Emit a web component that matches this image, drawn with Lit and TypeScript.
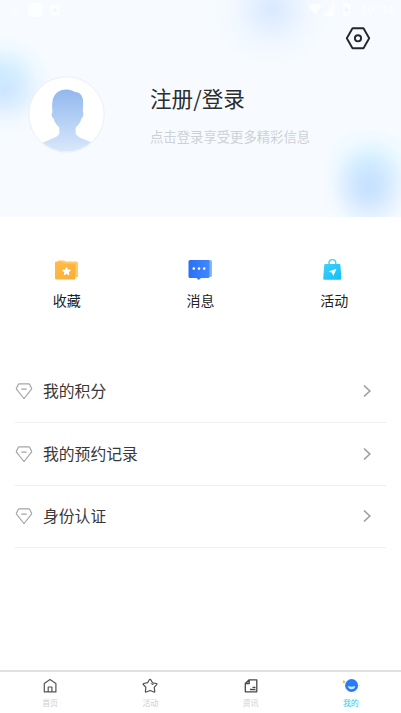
import { LitElement, html, css, svg } from "lit";
import { customElement } from "lit/decorators.js";
import { classMap } from "lit/directives/class-map.js";

const statusLeft = svg`
  <path d="M12 9h6M15 5v6M11 14h9" stroke="#fff" stroke-width="2" opacity=".7"/>
  <rect x="28" y="3" width="14" height="14" rx="2" fill="#fff"/>
  <path d="M50 6l3-2 2 2 3-2 2 3-1 8h-8z" fill="#fff"/><circle cx="55" cy="10" r="2" fill="#f3f8ff"/>`;

const folder = svg`
  <path d="M4 1.500h6l2 1h10.500q1.500 0 1.500 1.500V18H5z" fill="#ffcb68"/>
  <path d="M1 3.500q0-1 1-1h6l2 2h10q1.500 0 1.500 1.500v13q0 1.500-1.500 1.500h-17.500q-1.500 0-1.500-1.500z" fill="url(#fo)"/>
  <path d="M12.500 7.800l1.500 2.800 3.100.5-2.200 2.200.5 3.100-2.900-1.400-2.800 1.400.5-3.100L8 11.100l3.100-.5z" fill="#fff"/>
  <defs><linearGradient id="fo" x1="0" y1="0" x2="1" y2="1"><stop stop-color="#ffbd4a"/><stop offset="1" stop-color="#fcad35"/></linearGradient></defs>`;

const message = svg`
  <path d="M4 1h18.500q1.500 0 1.500 1.500v14q0 1.500-1.500 1.500H4z" fill="#86b5ff"/>
  <path d="M2 1h18q1.500 0 1.500 1.500v15q0 1.500-1.500 1.500H13l-2.300 2L8.500 19H2Q.5 19 .5 17.500v-15Q.5 1 2 1z" fill="url(#me)"/>
  <g fill="#fff"><circle cx="5.800" cy="9.600" r="1.300"/><circle cx="11" cy="9.600" r="1.300"/><circle cx="16.200" cy="9.600" r="1.300"/></g>
  <defs><linearGradient id="me"><stop stop-color="#2870f6"/><stop offset="1" stop-color="#4088ff"/></linearGradient></defs>`;

const bag = svg`
  <path d="M7 7V4a3.400 3.400 0 0 1 6.800 0V7" fill="none" stroke="#4acbf5" stroke-width="1.400"/>
  <path d="M3.200 5h14.200q.9 0 1 .9l1 13.300q.1 1.600-1.500 1.600H2.700q-1.600 0-1.500-1.600l1-13.300q.1-.9 1-.9z" fill="url(#ba)"/>
  <path d="M14.500 9.700l-3.200 7.200-1.300-3.200-3.300-1.100z" fill="#fff"/>
  <defs><linearGradient id="ba" x1="0" y1="0" x2="1" y2="1"><stop stop-color="#3fd2fb"/><stop offset="1" stop-color="#12bdf5"/></linearGradient></defs>`;

const home = svg`<path d="M2.300 5.500L8 1.600l5.900 3.900v8.400H2.300zM6.200 13.900V9h3.700v4.900" fill="none" stroke="#555" stroke-width="1.200" stroke-linejoin="round"/>`;
const star = svg`<path d="M7.500 1.500q.8-.6 1.300.3l1.700 3 3.900.7q1 .3.300 1.100l-2.500 2.700.6 4q0 1-.9.700l-3.700-1.500-4 1.500q-.9.200-.8-.7l.5-4L1.300 6.500q-.6-.8.400-1l3.900-.8z" fill="none" stroke="#505050" stroke-width="1.200" stroke-linejoin="round"/><path d="M9 5.200l1 1.300 1.700-.5" fill="none" stroke="#505050"/>`;
const news = svg`<path d="M6.200 1.800h7.600v12H2.300V5.500zM6.200 1.800v3.700H2.300M9.500 9.300h3M7 11.500h5.500" fill="none" stroke="#484848" stroke-width="1.300" stroke-linejoin="round"/>`;
const mine = svg`<circle cx="8.600" cy="7.500" r="6.500" fill="#267cf9"/><path d="M5 8q3.800 1.300 7.200 0-.5 3.200-3.600 3.200T5 8z" fill="#d9e9ff"/><path d="M.8 1.800l.7 1.200 1.400.4-1.100.8-.2 1.400-1.100-.9-1.200.2.600-1.300z" fill="#f5b64b"/><circle cx="16.300" cy="7.500" r=".6" fill="#f3cf92"/>`;

@customElement("app-root")
export class AppRoot extends LitElement {
  static styles = css`
    :host {
      display: flex;
      flex-direction: column;
      height: 713px;
      overflow: hidden;
      background: #fff;
      color: #333;
      font-family: "Noto Sans CJK SC", sans-serif;
    }
    svg { display: block; flex: none; overflow: visible; }
    .hero {
      height: 217px;
      flex: none;
      background:
        radial-gradient(ellipse 48px 50px at 369px 188px, #bddaffcc 0, #c1ddffb0 25%, #cce3ff80 50%, #def0ff30 78%, #f0f8ff00 100%),
        radial-gradient(ellipse 50px 42px at 370px 166px, #c4efffb0 0, #cff2ff88 35%, #dcf5ff40 68%, #f0faff00 100%),
        radial-gradient(ellipse 52px 44px at 4px 92px, #c3dfffb0 0, #cae3ff80 35%, #daedff38 70%, #f0f8ff00 100%),
        radial-gradient(ellipse 52px 42px at 0 74px, #baeaffb0 0, #c7edff80 35%, #daf3ff38 70%, #f0faff00 100%),
        radial-gradient(ellipse 60px 60px at 272px 9px, #d4e5ffd0 0, #dae9ffa0 30%, #e4f0ff50 62%, #f3f9ff00 100%),
        #f7fbff;
    }
    .status { display: flex; justify-content: space-between; height: 20px; opacity: .8; }
    .system { display: flex; align-items: center; padding-right: 7px; gap: 2px; }
    .time { color: #fff; font: 500 13px/20px Roboto, sans-serif; letter-spacing: .2px; }
    .settings { display: flex; justify-content: flex-end; height: 36px; padding: 6px 30px 0 0; box-sizing: border-box; }
    .profile { display: flex; padding: 20px 0 0 28px; }
    .copy { padding: 7px 0 0 45px; }
    .login { margin: 0; font-weight: 400; font-size: 21.600px; line-height: 30px; color: #2b2d30; }
    .hint { margin: 14px 0 0; font-size: 13.350px; line-height: 20px; color: #ced1d4; }
    .shortcuts { display: grid; grid-template-columns: repeat(3, 1fr); padding-top: 42px; height: 101.400px; flex: none; }
    .shortcut { display: flex; flex-direction: column; align-items: center; gap: 8px; font-size: 14px; line-height: 22px; color: #222; }
    .list { flex: 1; padding: 0 15px; }
    .row { display: flex; align-items: center; height: 62.600px; box-sizing: border-box; border-bottom: 1px solid #efefef; font-size: 15.800px; color: #383838; }
    .label { flex: 1; padding-left: 10px; line-height: 24px; }
    .chevron { margin-right: 14px; }
    .tabs { display: grid; grid-template-columns: repeat(4, 1fr); height: 43px; box-sizing: border-box; border-top: 2px solid #e1e1e1; flex: none; }
    .tab { display: flex; flex-direction: column; align-items: center; padding-top: 6px; gap: 3px; font-size: 8px; line-height: 12px; color: #cecece; }
    .active { color: #35c6f5; }
  `;

  private shortcut(icon: unknown, label: string, width: number) {
    return html`<div class="shortcut"><svg width=${width} height="22" viewBox="0 0 ${width} 22">${icon}</svg><span>${label}</span></div>`;
  }

  private row(label: string) {
    return html`<div class="row">
      <svg width="18" height="18" viewBox="0 0 18 18" fill="none" stroke="#a4a4a4" stroke-width="1.200" stroke-linejoin="round"><path d="M4.300 1.800h9.400q.6 0 .9.500L16.600 6.200q.3.500-.1 1L9.500 16q-.5.600-1 0l-7-8.800q-.4-.5-.1-1L3.400 2.300q.3-.5.900-.5zM6.300 7.200h5.400"/></svg>
      <span class="label">${label}</span>
      <svg class="chevron" width="10" height="14" viewBox="0 0 10 14"><path d="M2 1.500L7.800 7 2 12.500" fill="none" stroke="#a0a0a0" stroke-width="1.700"/></svg>
    </div>`;
  }

  private tab(icon: unknown, label: string, active = false) {
    return html`<div class=${classMap({ tab: true, active })}><svg width="16" height="16" viewBox="0 0 16 16">${icon}</svg><span>${label}</span></div>`;
  }

  render() {
    return html`
      <header class="hero">
        <div class="status">
          <svg width="70" height="20">${statusLeft}</svg>
          <div class="system">
            <svg width="50" height="20" fill="#fff"><path d="M0 6q7-5 14 0L7 15zM26 4v12H15zM35 4h2V3h3v1h2v12h-7z"/><path d="M38 7l-2 4h2v3l3-5h-2V7z" fill="#eef6ff"/></svg>
            <span class="time">10:34</span>
          </div>
        </div>
        <div class="settings">
          <svg width="26" height="24" viewBox="0 0 26 24" fill="none" stroke="#25272b" stroke-width="1.900" stroke-linejoin="round"><path d="M7.500 2.300h11L24.200 12.300l-5.700 9.900h-11L1.800 12.300z"/><circle cx="13" cy="12.300" r="3.100"/></svg>
        </div>
        <div class="profile">
          <svg width="77" height="77" viewBox="0 0 77 77">
            <defs>
              <linearGradient id="person" x1="0" y1="0" x2="0" y2="1"><stop stop-color="#91b8ee"/><stop offset="1" stop-color="#dbe9fb"/></linearGradient>
              <clipPath id="round"><circle cx="38.500" cy="38.500" r="37"/></clipPath>
            </defs>
            <circle cx="38.500" cy="38.500" r="37.700" fill="#fff" stroke="#eceff3" stroke-width="1"/>
            <path clip-path="url(#round)" fill="url(#person)" d="M24.500 36C24 33 24 28 24.500 25C25.500 18 31 13.600 38.500 13.600C42 13.600 44.500 14.500 47 16C51 15.800 54.500 19 55 24C55.300 28 55 33 54.800 36C56.300 38 55 41 53.500 42.500C52.500 46.500 50.500 49 47.700 51.500V57C48 60.500 53 62 63.700 66.500V77H14V67C25 62 31 60.500 31.300 57V51.500C28.500 49 26.500 46.500 25.500 42.500C23.800 41 22.800 38 24.500 36Z"/>
          </svg>
          <div class="copy"><h1 class="login">注册/登录</h1><p class="hint">点击登录享受更多精彩信息</p></div>
        </div>
      </header>
      <section class="shortcuts">
        ${this.shortcut(folder, "收藏", 26)}${this.shortcut(message, "消息", 25)}${this.shortcut(bag, "活动", 25)}
      </section>
      <main class="list">
        ${["我的积分", "我的预约记录", "身份认证"].map((label) => this.row(label))}
      </main>
      <nav class="tabs">
        ${this.tab(home, "首页")}${this.tab(star, "活动")}${this.tab(news, "资讯")}${this.tab(mine, "我的", true)}
      </nav>`;
  }
}
